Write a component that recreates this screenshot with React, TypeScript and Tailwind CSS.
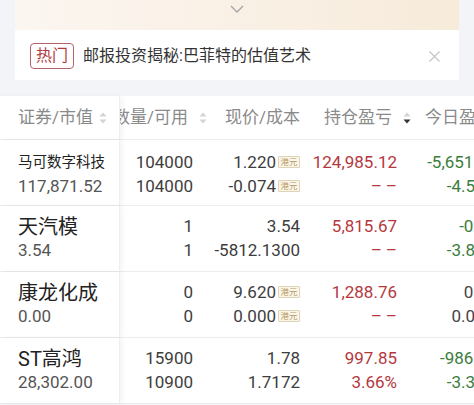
import React from 'react'

type Row = {
  name: string
  nameSize: string
  value: string
  qty: [string, string]
  price: [string, string]
  hkd: boolean
  pnl: [string, string]
  today: [string, string]
  todayTone: 'green' | 'gray'
}

const rows: Row[] = [
  {
    name: '马可数字科技',
    nameSize: 'text-[14.5px]',
    value: '117,871.52',
    qty: ['104000', '104000'],
    price: ['1.220', '-0.074'],
    hkd: true,
    pnl: ['124,985.12', '--'],
    today: ['-5,651.56', '-4.58%'],
    todayTone: 'green',
  },
  {
    name: '天汽模',
    nameSize: 'text-[20px]',
    value: '3.54',
    qty: ['1', '1'],
    price: ['3.54', '-5812.1300'],
    hkd: false,
    pnl: ['5,815.67', '--'],
    today: ['-0.13', '-3.81%'],
    todayTone: 'green',
  },
  {
    name: '康龙化成',
    nameSize: 'text-[20px]',
    value: '0.00',
    qty: ['0', '0'],
    price: ['9.620', '0.000'],
    hkd: true,
    pnl: ['1,288.76', '--'],
    today: ['0.00', '0.00%'],
    todayTone: 'gray',
  },
  {
    name: 'ST高鸿',
    nameSize: 'text-[20px]',
    value: '28,302.00',
    qty: ['15900', '10900'],
    price: ['1.78', '1.7172'],
    hkd: false,
    pnl: ['997.85', '3.66%'],
    today: ['-986.52', '-3.33%'],
    todayTone: 'green',
  },
]

const SortIcon = ({ active }: { active?: boolean }) => (
  <svg width="8" height="12" viewBox="0 0 8 12" className="shrink-0">
    <path d="M4 0.5 L7.5 4.5 H0.5 Z" fill="#d4d4d8" />
    <path d="M4 11.5 L7.5 7.5 H0.5 Z" fill={active ? '#333333' : '#d4d4d8'} />
  </svg>
)

const Hkd = () => (
  <span className="ml-[2px] self-start mt-[5px] h-[12px] w-[22px] flex items-center justify-center border border-[#e0d2b4] bg-[#fbf6ea] text-[8.5px] leading-none text-[#b99b66] rounded-[1px]">
    港元
  </span>
)

// empty value shows as a spaced double dash
const Cell = ({ v }: { v: string }) =>
  v === '--' ? <span className="tracking-[4px] -mr-[4px]">––</span> : <>{v}</>

const App = () => {
  return (
    <div
      className="w-[474px] h-[405px] overflow-hidden bg-[#f3f4f8]"
      style={{ fontFamily: 'Roboto, "Noto Sans CJK SC", sans-serif' }}
    >
      {/* banner card */}
      <div className="mx-[15px] bg-white">
        <div className="h-[30px] flex justify-center pt-[5px] bg-gradient-to-r from-[#fcf6f1] to-[#f7ebda]">
          <svg width="14" height="8" viewBox="0 0 14 8">
            <path d="M1 1 L7 7 L13 1" fill="none" stroke="#a3a3a3" strokeWidth="1.3" />
          </svg>
        </div>
        <div className="h-[50px] flex items-center pl-[15px] pr-[16px] pt-[2px]">
          <span className="h-[26px] w-[44px] flex items-center justify-center border border-[#b5626a] rounded-[4px] text-[16px] text-[#b23b3f] leading-none">
            热门
          </span>
          <span className="ml-[9px] text-[16px] text-[#333]">邮报投资揭秘:巴菲特的估值艺术</span>
          <svg width="11" height="11" viewBox="0 0 11 11" className="ml-auto mr-[3px]">
            <path d="M0.5 0.5 L10.5 10.5 M10.5 0.5 L0.5 10.5" stroke="#c4c4c4" strokeWidth="1.2" />
          </svg>
        </div>
      </div>

      {/* holdings table */}
      <div className="mt-[16px] bg-white">
        {/* header */}
        <div className="flex h-[44px] border-b border-[#ececec] text-[17px] text-[#8a8a8a]">
          <div className="w-[120px] shrink-0 flex items-center pl-[18px] border-r border-[#eeeeee] shadow-[3px_0_5px_rgba(0,0,0,0.04)] bg-white relative z-10">
            <span>证券/市值</span>
            <span className="ml-[6px]">
              <SortIcon />
            </span>
          </div>
          <div className="flex-1 overflow-hidden">
            <div className="flex h-full -ml-[20px]">
              <div className="w-[115px] shrink-0 flex items-center justify-end pr-[8px]">
                <span className="whitespace-nowrap">数量/可用</span>
                <span className="ml-[11px]">
                  <SortIcon />
                </span>
              </div>
              <div className="w-[90px] shrink-0 flex items-center justify-end pr-[5px] whitespace-nowrap">现价/成本</div>
              <div className="w-[110px] shrink-0 flex items-center justify-end pr-[4px]">
                <span className="whitespace-nowrap">持仓盈亏</span>
                <span className="ml-[11px]">
                  <SortIcon active />
                </span>
              </div>
              <div className="w-[95px] shrink-0 flex items-center pl-[10px] whitespace-nowrap">今日盈亏</div>
            </div>
          </div>
        </div>

        {/* rows */}
        {rows.map((r, idx) => {
          const todayColor = r.todayTone === 'green' ? 'text-[#3b7d3c]' : 'text-[#444]'
          const top = idx === 0 ? 'pt-[11px]' : 'pt-[9px]'
          return (
            <div key={r.name} className="flex h-[66px] border-b border-[#ececec] text-[17px]">
              <div className={`w-[120px] shrink-0 pl-[18px] ${top} border-r border-[#eeeeee] shadow-[3px_0_5px_rgba(0,0,0,0.04)] bg-white relative z-10`}>
                <div className={`h-[24px] flex items-center text-[#222] whitespace-nowrap ${r.nameSize}`}>{r.name}</div>
                <div className="h-[24px] flex items-center text-[#555]">{r.value}</div>
              </div>
              <div className="flex-1 overflow-hidden">
                <div className={`flex h-full -ml-[20px] ${top} text-[#3d3d3d]`}>
                  <div className="w-[115px] shrink-0 pr-[22px]">
                    <div className="h-[24px] flex items-center justify-end">{r.qty[0]}</div>
                    <div className="h-[24px] flex items-center justify-end">{r.qty[1]}</div>
                  </div>
                  <div className="w-[90px] shrink-0 pr-[5px]">
                    {r.price.map((p, i) => (
                      <div key={i} className="h-[24px] flex items-center justify-end whitespace-nowrap">
                        {p}
                        {r.hkd && <Hkd />}
                      </div>
                    ))}
                  </div>
                  <div className="w-[110px] shrink-0 pr-[18px] text-[#b5383e]">
                    <div className="h-[24px] flex items-center justify-end">
                      <Cell v={r.pnl[0]} />
                    </div>
                    <div className="h-[24px] flex items-center justify-end">
                      <Cell v={r.pnl[1]} />
                    </div>
                  </div>
                  <div className={`w-[96px] shrink-0 pr-[14px] ${todayColor}`}>
                    <div className="h-[24px] flex items-center justify-end whitespace-nowrap">{r.today[0]}</div>
                    <div className="h-[24px] flex items-center justify-end whitespace-nowrap">{r.today[1]}</div>
                  </div>
                </div>
              </div>
            </div>
          )
        })}
      </div>
    </div>
  )
}

export default App
